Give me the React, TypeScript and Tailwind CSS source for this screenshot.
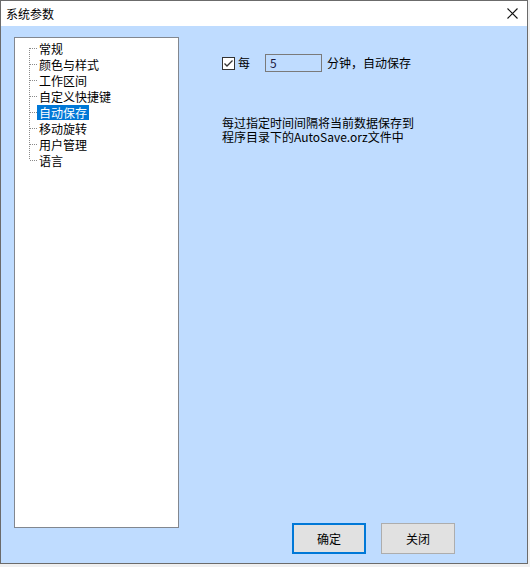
import React from 'react'

// "系统参数" settings dialog — auto-save page selected.

const NAV_ITEMS = ['常规', '颜色与样式', '工作区间', '自定义快捷键', '自动保存', '移动旋转', '用户管理', '语言']
const ACTIVE = '自动保存'

const FONT = { fontFamily: '"Noto Sans CJK SC", "Microsoft YaHei", sans-serif' }

/** Dotted tree connector for one 16px row. */
function Connector({ first, last }: { first: boolean; last: boolean }) {
  const y1 = first ? 8 : 0
  const y2 = last ? 8 : 16
  return (
    <svg width="9" height="16" viewBox="0 0 9 16" className="shrink-0" shapeRendering="crispEdges">
      <line x1="0.5" y1={y1} x2="0.5" y2={y2} stroke="#8a8a8a" strokeDasharray="1 1" />
      <line x1="1" y1="8.5" x2="9" y2="8.5" stroke="#8a8a8a" strokeDasharray="1 1" />
    </svg>
  )
}

function CloseIcon() {
  return (
    <svg width="11" height="11" viewBox="0 0 11 11">
      <path d="M0.5 0.5 L10.5 10.5 M10.5 0.5 L0.5 10.5" stroke="#111" strokeWidth="1.1" />
    </svg>
  )
}

function CheckIcon() {
  return (
    <svg width="13" height="13" viewBox="0 0 13 13" className="shrink-0">
      <rect x="0.5" y="0.5" width="12" height="12" fill="#fff" stroke="#333" />
      <path d="M2.5 6.5 L5 9 L10.5 3.5" fill="none" stroke="#333" strokeWidth="1.3" />
    </svg>
  )
}

export default function App() {
  return (
    <div className="w-[530px] h-[567px] bg-[#f0f0f0] text-[12px] text-black" style={FONT}>
      <div className="w-[528px] h-[564px] border border-[#6b6b6b] flex flex-col bg-white">
        {/* title bar */}
        <div className="h-[25px] flex items-center justify-between pl-[5px] pr-[9px] bg-white">
          <span className="leading-[14px]">系统参数</span>
          <CloseIcon />
        </div>

        <div className="flex-1 flex bg-[#bfdcff]">
          {/* tree */}
          <div className="ml-[13px] mt-[11px] w-[165px] h-[491px] border border-[#82878f] bg-white pt-[2px] shrink-0">
            {NAV_ITEMS.map((item, i) => (
              <div key={item} className="h-[16px] flex items-center pl-[14px]">
                <Connector first={i === 0} last={i === NAV_ITEMS.length - 1} />
                <span
                  className={
                    item === ACTIVE
                      ? 'ml-[-1px] px-[2px] leading-[15px] bg-[#0078d7] text-white'
                      : 'ml-[-1px] px-[2px] leading-[15px]'
                  }
                >
                  {item}
                </span>
              </div>
            ))}
          </div>

          {/* auto-save page */}
          <div className="flex-1 flex flex-col pl-[43px] pt-[28px] pb-[9px]">
            <div className="flex items-center h-[18px]">
              <CheckIcon />
              <span className="ml-[3px]">每</span>
              <div className="ml-[15px] w-[57px] h-[18px] border border-[#7a7a7a] flex items-center pl-[4px] text-[#1a1a40]">
                5
              </div>
              <span className="ml-[5px]">分钟，自动保存</span>
            </div>

            <p className="mt-[44px] leading-[14px]">
              每过指定时间间隔将当前数据保存到
              <br />
              程序目录下的AutoSave.orz文件中
            </p>

            <div className="mt-auto flex gap-[15px] ml-[70px]">
              <button className="w-[74px] h-[31px] border-2 border-[#0078d7] bg-[#e1e1e1]">确定</button>
              <button className="w-[74px] h-[31px] border border-[#adadad] bg-[#e1e1e1]">关闭</button>
            </div>
          </div>
        </div>
      </div>
    </div>
  )
}
